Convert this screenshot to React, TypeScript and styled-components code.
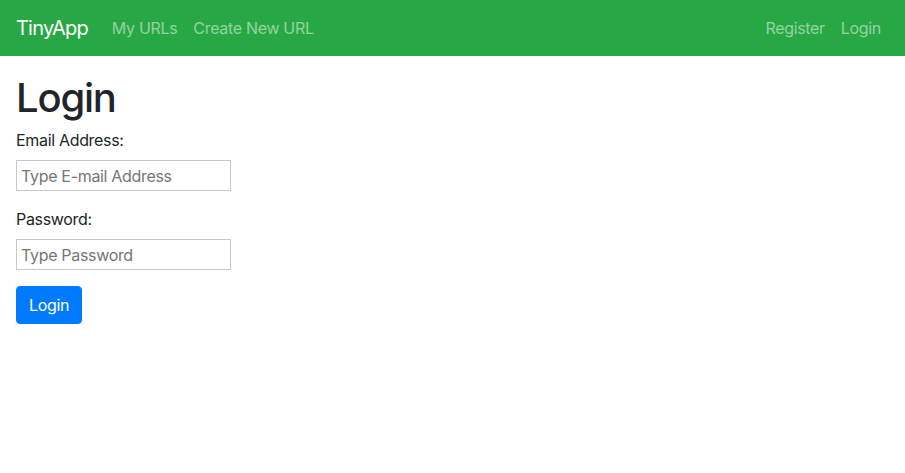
import React from "react";
import styled, { createGlobalStyle } from "styled-components";

const GlobalStyle = createGlobalStyle`
  *, *::before, *::after {
    box-sizing: border-box;
  }

  body {
    margin: 0;
    font-family: Inter, "Liberation Sans", sans-serif;
    font-size: 16px;
    line-height: 1.5;
    letter-spacing: -0.02em;
    color: #212529;
    background-color: #fff;
  }
`;

const Navbar = styled.nav`
  display: flex;
  align-items: center;
  height: 56px;
  padding: 8px 16px;
  background-color: #28a745;
`;

const Brand = styled.a`
  margin-right: 16px;
  font-size: 20px;
  line-height: 30px;
  letter-spacing: -0.04em;
  color: #fff;
  text-decoration: none;
`;

const NavGroup = styled.div<{ $right?: boolean }>`
  display: flex;
  align-items: center;
  margin-left: ${(p) => (p.$right ? "auto" : "0")};
`;

const NavLink = styled.a`
  padding: 8px;
  color: rgba(255, 255, 255, 0.5);
  text-decoration: none;
`;

const Main = styled.main`
  padding: 18px 16px 0;
`;

const Title = styled.h1`
  margin: 0 0 6px;
  font-size: 40px;
  font-weight: 500;
  line-height: 1.2;
  letter-spacing: -0.03em;
`;

const FormGroup = styled.div`
  display: flex;
  flex-direction: column;
  align-items: flex-start;
  margin-bottom: 16px;
`;

const Label = styled.label`
  margin-bottom: 8px;
`;

const Input = styled.input`
  width: 215px;
  height: 31px;
  padding: 0 4px;
  border: 1px solid #c8c8c8;
  border-radius: 0;
  font-family: inherit;
  font-size: 16px;
  letter-spacing: -0.02em;
  color: #212529;

  &::placeholder {
    color: #757575;
  }
`;

const Button = styled.button`
  padding: 6px 12px;
  border: 1px solid #007bff;
  border-radius: 4px;
  background-color: #007bff;
  color: #fff;
  font-family: inherit;
  font-size: 16px;
  line-height: 24px;
  letter-spacing: -0.02em;
  cursor: pointer;
`;

const App: React.FC = () => {
  return (
    <>
      <GlobalStyle />
      <Navbar>
        <Brand href="#">TinyApp</Brand>
        <NavGroup>
          <NavLink href="#">My URLs</NavLink>
          <NavLink href="#">Create New URL</NavLink>
        </NavGroup>
        <NavGroup $right>
          <NavLink href="#">Register</NavLink>
          <NavLink href="#">Login</NavLink>
        </NavGroup>
      </Navbar>
      <Main>
        <Title>Login</Title>
        <form onSubmit={(e) => e.preventDefault()}>
          <FormGroup>
            <Label htmlFor="email">Email Address:</Label>
            <Input id="email" type="email" placeholder="Type E-mail Address" />
          </FormGroup>
          <FormGroup>
            <Label htmlFor="password">Password:</Label>
            <Input id="password" type="password" placeholder="Type Password" />
          </FormGroup>
          <Button type="submit">Login</Button>
        </form>
      </Main>
    </>
  );
};

export default App;
